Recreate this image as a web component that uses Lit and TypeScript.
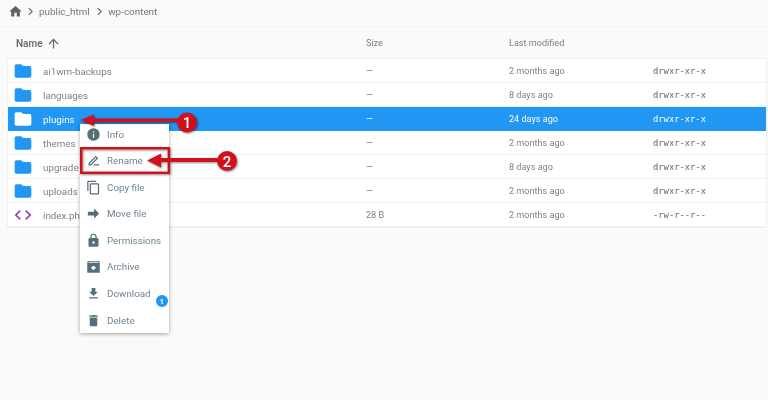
import { LitElement, html, css, svg } from "lit";
import { customElement } from "lit/decorators.js";

const folderPath = svg`<path d="M10 4H4a2 2 0 0 0-2 2v12a2 2 0 0 0 2 2h16a2 2 0 0 0 2-2V8a2 2 0 0 0-2-2h-8l-2-2z"/>`;

const rows = [
  { name: "ai1wm-backups", size: "—", mod: "2 months ago", perm: "drwxr-xr-x" },
  { name: "languages", size: "—", mod: "8 days ago", perm: "drwxr-xr-x" },
  { name: "plugins", size: "—", mod: "24 days ago", perm: "drwxr-xr-x", sel: true },
  { name: "themes", size: "—", mod: "2 months ago", perm: "drwxr-xr-x" },
  { name: "upgrade", size: "—", mod: "8 days ago", perm: "drwxr-xr-x" },
  { name: "uploads", size: "—", mod: "2 months ago", perm: "drwxr-xr-x" },
  { name: "index.php", size: "28 B", mod: "2 months ago", perm: "-rw-r--r--", code: true },
];

const menu = [
  { label: "Info", icon: svg`<path d="M12 2a10 10 0 1 0 0 20 10 10 0 0 0 0-20zm1 15h-2v-6h2v6zm0-8h-2V7h2v2z"/>` },
  { label: "Rename", icon: svg`<path d="M15.6 4.4l4 4L8 20H4v-4L15.6 4.4zM6 16.8V18h1.2l9.6-9.6-1.2-1.2L6 16.8z" fill-rule="evenodd"/><path d="M13 18h8v2h-10z"/>` },
  { label: "Copy file", icon: svg`<path d="M16 1H4a2 2 0 0 0-2 2v14h2V3h12V1zm3 4H8a2 2 0 0 0-2 2v14a2 2 0 0 0 2 2h11a2 2 0 0 0 2-2V7a2 2 0 0 0-2-2zm0 16H8V7h11v14z"/>` },
  { label: "Move file", icon: svg`<path d="M3 9h10V4l8 8-8 8v-5H3z"/>` },
  { label: "Permissions", icon: svg`<path d="M18 8h-1V6a5 5 0 0 0-10 0v2H6a2 2 0 0 0-2 2v10a2 2 0 0 0 2 2h12a2 2 0 0 0 2-2V10a2 2 0 0 0-2-2zm-6 9a2 2 0 1 1 0-4 2 2 0 0 1 0 4zm3.1-9H8.9V6a3.1 3.1 0 0 1 6.2 0v2z"/>` },
  { label: "Archive", icon: svg`<path d="M3 3h18l1 3v15a1 1 0 0 1-1 1H3a1 1 0 0 1-1-1V6l1-3zm9 15l5-5h-3v-2h-4v2H7l5 5zM4 6h16l-.5-1.5h-15L4 6z" fill-rule="evenodd"/>` },
  { label: "Download", icon: svg`<path d="M19 9h-4V3H9v6H5l7 7 7-7zM5 18v2h14v-2H5z"/>` },
  { label: "Delete", icon: svg`<path d="M6 19a2 2 0 0 0 2 2h8a2 2 0 0 0 2-2V7H6v12zM19 4h-3.5l-1-1h-5l-1 1H5v2h14V4z"/>` },
];

@customElement("app-root")
export class AppRoot extends LitElement {
  static styles = css`
    :host {
      display: block;
      position: relative;
      width: 768px;
      height: 400px;
      overflow: hidden;
      background: #fafafa;
      font-family: Roboto, "Liberation Sans", sans-serif;
      font-size: 9.1px;
      color: #757575;
      filter: blur(0.3px);
    }
    .crumbs {
      height: 27px;
      box-sizing: border-box;
      border-bottom: 1px solid #f3f3f3;
      display: flex;
      align-items: center;
      padding: 0 0 3px 7.5px;
      gap: 0;
      font-size: 9.9px;
      color: #757575;
    }
    .crumbs svg { display: block; flex: none; }
    .home { width: 15px; height: 15px; fill: #616161; }
    .sep { width: 15px; height: 15px; fill: #6e6e6e; }
    .crumbs span { margin: 0 2px 0 1.5px; }
    .table { margin: 0 2.5px 0 7.5px; }
    .grid {
      display: grid;
      grid-template-columns: 358.5px 143px 144px 1fr;
      align-items: center;
    }
    .head {
      height: 32px;
      color: #7d7d7d;
    }
    .head .name {
      padding-left: 8.5px;
      display: flex;
      align-items: center;
      gap: 3px;
      font-weight: 500;
      font-size: 10px;
      color: #666;
    }
    .head .name svg { width: 15px; height: 15px; fill: #6b6b6b; }
    .body {
      background: #fff;
      box-shadow: 0 0 1px rgba(0, 0, 0, 0.25);
    }
    .row {
      height: 24px;
      box-sizing: border-box;
      border-bottom: 1px solid #f0f0f0;
      color: #808080;
    }
    .row.sel {
      background: #2196f3;
      color: #fff;
      border-bottom-color: #2196f3;
    }
    .row > div { padding-top: 1px; }
    .cell-name {
      display: flex;
      align-items: center;
      gap: 10px;
      padding-left: 5.5px;
      font-size: 9.8px;
    }
    .cell-name svg { width: 20px; height: 20px; fill: #2196f3; flex: none; margin-top: -1px; }
    .sel .cell-name svg { fill: #fff; }
    .cell-name svg.code { fill: #8e44ad; }
    .perm {
      font-family: "DejaVu Sans Mono", "Liberation Mono", monospace;
      font-size: 8.8px;
      color: #666;
    }
    .sel .perm { color: #fff; }
    .menu {
      position: absolute;
      left: 80px;
      top: 124px;
      width: 89px;
      box-sizing: border-box;
      background: #fff;
      box-shadow: 0 1px 4px rgba(0, 0, 0, 0.35);
      display: flex;
      flex-direction: column;
      color: #6f8491;
      font-size: 9.8px;
    }
    .item {
      position: relative;
      height: 26.6px;
      display: flex;
      align-items: center;
      gap: 6px;
      padding-left: 6px;
    }
    .item:first-child { height: 20px; margin-bottom: 3.2px; }
    .item svg { width: 15px; height: 15px; fill: #546e7a; flex: none; }
    .badge {
      position: absolute;
      left: 76px;
      top: 15px;
      width: 12px;
      height: 12px;
      border-radius: 50%;
      background: #2196f3;
      color: #fff;
      font-size: 7.5px;
      font-weight: 700;
      display: flex;
      align-items: center;
      justify-content: center;
    }
    .overlay {
      position: absolute;
      left: 0;
      top: 0;
      width: 768px;
      height: 400px;
      pointer-events: none;
      filter: drop-shadow(1px 1px 1px rgba(0, 0, 0, 0.45));
    }
    .num {
      font-family: Roboto, sans-serif;
      font-size: 15px;
      font-weight: 500;
      fill: #fff;
      text-anchor: middle;
    }
  `;

  render() {
    return html`
      <div class="crumbs">
        <svg class="home" viewBox="0 0 24 24"><path d="M10 20v-6h4v6h5v-8h3L12 3 2 12h3v8z"/></svg>
        <svg class="sep" viewBox="0 0 24 24"><path d="M8.6 16.6L13.2 12 8.6 7.4 10 6l6 6-6 6z"/></svg>
        <span>public_html</span>
        <svg class="sep" viewBox="0 0 24 24"><path d="M8.6 16.6L13.2 12 8.6 7.4 10 6l6 6-6 6z"/></svg>
        <span>wp-content</span>
      </div>
      <div class="table">
        <div class="grid head">
          <div class="name">Name
            <svg viewBox="0 0 24 24"><path d="M4 12l1.4 1.4L11 7.8V20h2V7.8l5.6 5.6L20 12l-8-8z"/></svg>
          </div>
          <div>Size</div>
          <div>Last modified</div>
          <div></div>
        </div>
        <div class="body">
          ${rows.map(
            (r) => html`
              <div class="grid row ${r.sel ? "sel" : ""}">
                <div class="cell-name">
                  ${r.code
                    ? html`<svg class="code" viewBox="0 0 24 24"><path d="M9.4 16.6L4.8 12l4.6-4.6L8 6l-6 6 6 6zm5.2 0l4.6-4.6-4.6-4.6L16 6l6 6-6 6z"/></svg>`
                    : html`<svg viewBox="0 0 24 24">${folderPath}</svg>`}
                  <span>${r.name}</span>
                </div>
                <div>${r.size}</div>
                <div>${r.mod}</div>
                <div class="perm">${r.perm}</div>
              </div>
            `
          )}
        </div>
      </div>
      <div class="menu">
        ${menu.map(
          (m) => html`
            <div class="item">
              <svg viewBox="0 0 24 24">${m.icon}</svg>
              <span>${m.label}</span>
              ${m.label === "Download" ? html`<div class="badge">1</div>` : ""}
            </div>
          `
        )}
      </div>
      <svg class="overlay" viewBox="0 0 768 400">
        <rect x="81.2" y="148.2" width="87.6" height="24.6" fill="none" stroke="#d0101a" stroke-width="2.4"/>
        <path d="M80.5 120L94 114.5v4h85v3.5h-85v4z" fill="#d0101a"/>
        <circle cx="187" cy="122.5" r="10" fill="#d0101a"/>
        <text class="num" x="187" y="128">1</text>
        <path d="M147 160.5L161 153.5v4.5h60v4h-60v5.5z" fill="#d0101a"/>
        <circle cx="227" cy="161" r="10" fill="#d0101a"/>
        <text class="num" x="227" y="166.5">2</text>
      </svg>
    `;
  }
}
